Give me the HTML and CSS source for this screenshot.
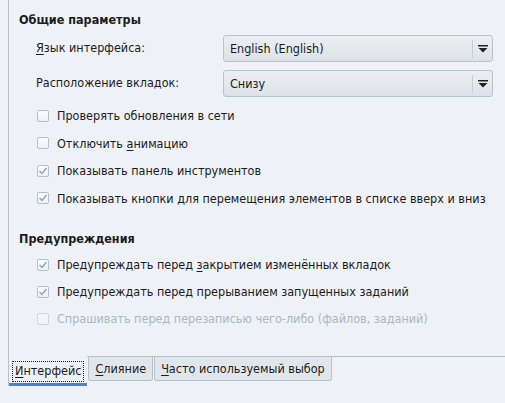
FILE: index.html
```html
<!DOCTYPE html>
<html>
<head>
<meta charset="utf-8">
<link rel="stylesheet" href="styles.css">
</head>
<body>
<div class="window">
  <div class="pane">
    <div class="heading">Общие параметры</div>
    <div class="form-row first">
      <span class="label"><u>Я</u>зык интерфейса:</span>
      <div class="combo"><span class="combo-text">English (English)</span><span class="combo-btn"><svg width="10" height="8" viewBox="0 0 10 8"><rect x="0" y="0" width="10" height="1.5" fill="#222"/><path d="M0.5 3 L9.5 3 L5 7.5 Z" fill="#222"/></svg></span></div>
    </div>
    <div class="form-row">
      <span class="label">Расположение вкладок:</span>
      <div class="combo"><span class="combo-text">Снизу</span><span class="combo-btn"><svg width="10" height="8" viewBox="0 0 10 8"><rect x="0" y="0" width="10" height="1.5" fill="#222"/><path d="M0.5 3 L9.5 3 L5 7.5 Z" fill="#222"/></svg></span></div>
    </div>
    <div class="checks group1">
      <div class="check"><span class="box"></span><span>Проверять обновления в сети</span></div>
      <div class="check"><span class="box"></span><span>Отключить <u>а</u>нимацию</span></div>
      <div class="check"><span class="box"><svg width="10" height="10" viewBox="0 0 10 10"><path d="M1.5 5 L4 7.5 L8.5 2" fill="none" stroke="#8fa3b3" stroke-width="1.4"/></svg></span><span>Показывать панель инструментов</span></div>
      <div class="check"><span class="box"><svg width="10" height="10" viewBox="0 0 10 10"><path d="M1.5 5 L4 7.5 L8.5 2" fill="none" stroke="#8fa3b3" stroke-width="1.4"/></svg></span><span>Показывать кнопки для перемещения элементов в списке вверх и вниз</span></div>
    </div>
    <div class="heading second">Предупреждения</div>
    <div class="checks group2">
      <div class="check"><span class="box"><svg width="10" height="10" viewBox="0 0 10 10"><path d="M1.5 5 L4 7.5 L8.5 2" fill="none" stroke="#8fa3b3" stroke-width="1.4"/></svg></span><span>Предупреждать перед <u>з</u>акрытием изменённых вкладок</span></div>
      <div class="check"><span class="box"><svg width="10" height="10" viewBox="0 0 10 10"><path d="M1.5 5 L4 7.5 L8.5 2" fill="none" stroke="#8fa3b3" stroke-width="1.4"/></svg></span><span>Предупреждать перед прерыванием запущенных заданий</span></div>
      <div class="check disabled"><span class="box"></span><span>Спрашивать перед перезаписью чего-либо (файлов, заданий)</span></div>
    </div>
  </div>
  <div class="tabbar">
    <div class="tab active"><span class="focus"><u>И</u>нтерфейс</span></div>
    <div class="tab"><span><u>С</u>лияние</span></div>
    <div class="tab"><span><u>Ч</u>асто используемый выбор</span></div>
  </div>
</div>
</body>
</html>
```
FILE: styles.css
```css
html, body {
  margin: 0;
  padding: 0;
  background: #eef1f5;
}
body {
  font-family: "DejaVu Sans Condensed", "DejaVu Sans", sans-serif;
  font-size: 12.5px;
  color: #1c1c1c;
  width: 505px;
  height: 403px;
  overflow: hidden;
}
u {
  text-decoration-thickness: 1px;
  text-underline-offset: 2px;
}
.window {
  padding-left: 8px;
}
.pane {
  height: 357px;
  box-sizing: border-box;
  border-left: 1px solid #b6c2ca;
  border-bottom: 1px solid #b6c2ca;
  padding: 8px 12px 0 10px;
  display: flex;
  flex-direction: column;
}
.heading {
  font-weight: bold;
  font-size: 12.5px;
  height: 22px;
  display: flex;
  align-items: center;
}
.heading.second {
  margin-top: 14px;
  height: 25px;
}
.form-row {
  display: flex;
  align-items: center;
  height: 27px;
  margin-top: 8px;
  padding-left: 17px;
}
.form-row.first {
  margin-top: 5px;
}
.label {
  width: 187px;
  margin-top: -3px;
  white-space: nowrap;
}
.combo {
  width: 270px;
  height: 27px;
  box-sizing: border-box;
  border: 1px solid #b8c4cc;
  border-radius: 3px;
  background: linear-gradient(#eceff2, #dde2e6);
  display: flex;
  align-items: center;
}
.combo-text {
  flex: 1;
  padding-left: 6px;
}
.combo-btn {
  width: 19px;
  height: 17px;
  border-left: 1px solid #c4ced5;
  display: flex;
  align-items: center;
  justify-content: center;
  padding-top: 1px;
}
.checks {
  display: flex;
  flex-direction: column;
  padding-left: 18px;
}
.group1 {
  margin-top: 5px;
}
.group1 .check {
  height: 27.5px;
}
.group2 .check {
  height: 27px;
}
.check {
  display: flex;
  align-items: center;
  white-space: nowrap;
}
.box {
  width: 12px;
  height: 12px;
  flex: none;
  box-sizing: border-box;
  border: 1px solid #b4c0c8;
  border-radius: 2px;
  background: linear-gradient(#fbfcfd, #eef1f4);
  margin-right: 8px;
  display: flex;
  align-items: center;
  justify-content: center;
}
.disabled {
  color: #a9b9c2;
}
.disabled .box {
  border-color: #ccd6dc;
  background: #f2f4f7;
}
.tabbar {
  display: flex;
  align-items: flex-start;
}
.tab {
  height: 24px;
  box-sizing: border-box;
  padding: 0 6px 0 6px;
  display: flex;
  align-items: center;
  border: 1px solid #b6c2ca;
  border-top: none;
  border-radius: 0 0 3px 3px;
  background: #e1e6ea;
  margin-left: 1px;
  white-space: nowrap;
}
.tab.active {
  margin-left: 0;
  margin-top: -1px;
  height: 30px;
  padding: 5px 3px 0 3px;
  border-right: none;
  border-bottom: 3px solid #4a82cc;
  border-radius: 0 0 0 2px;
  background: #eef1f5;
  align-items: flex-start;
}
.focus {
  border: 1px dotted #222;
  padding: 2px 2px 3px 2px;
  line-height: 14px;
}
```
